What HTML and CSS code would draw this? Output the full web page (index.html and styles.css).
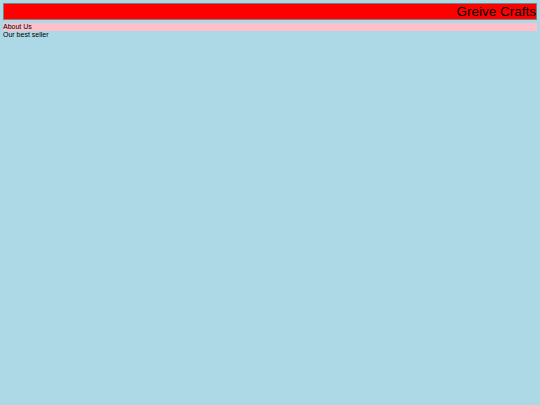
FILE: index.html
```html
<!DOCTYPE html>
<html>
<head>
<meta charset="utf-8">
<link rel="stylesheet" href="styles.css">
</head>
<body>
<header class="banner"><h1 class="title">Greive Crafts</h1></header>
<nav class="menu">About Us</nav>
<div class="feature">Our best seller</div>
</body>
</html>
```
FILE: styles.css
```css
html, body { height: 100%; }
body {
  margin: 3px;
  background: #add8e6;
  font-family: "Liberation Sans", Arial, sans-serif;
}
.banner {
  background: #ff0000;
  border: 1px solid #808080;
  text-align: right;
}
.title {
  margin: 0;
  font-size: 13.5px;
  font-weight: normal;
  line-height: 15px;
}
.menu {
  margin-top: 3px;
  background: #ffc0cb;
  font-size: 7px;
  line-height: 8px;
}
.feature {
  font-size: 7px;
  line-height: 8px;
}
```
